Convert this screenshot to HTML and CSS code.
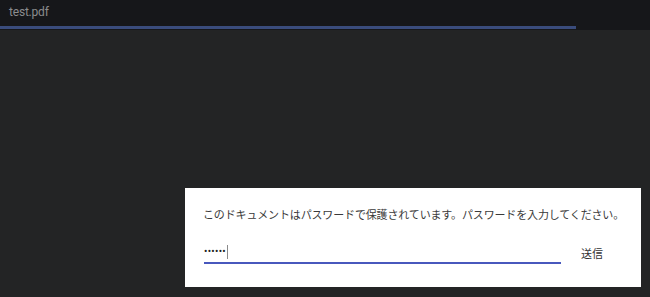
FILE: index.html
```html
<!DOCTYPE html>
<html lang="ja">
<head>
<meta charset="UTF-8" />
<title>test.pdf</title>
<link rel="stylesheet" href="styles.css">
</head>
<body>
  <header class="toolbar">
    <div class="title">test.pdf</div>
    <div class="progress"><div class="progress-fill" style="width: 576px"></div></div>
  </header>
  <main class="viewer">
    <form class="password-dialog" onsubmit="return false">
      <div class="prompt">このドキュメントはパスワードで保護されています。パスワードを入力してください。</div>
      <div class="row">
        <div class="field" role="textbox" aria-label="パスワード">
          <span class="dots">••••••</span><span class="caret"></span>
        </div>
        <button class="submit" type="submit">送信</button>
      </div>
    </form>
  </main>
</body>
</html>
```

FILE: styles.css
```css
* {
  box-sizing: border-box;
}
html, body {
  height: 100%;
}
body {
  margin: 0;
  background: #232425;
  font-family: Roboto, "Noto Sans CJK JP", sans-serif;
  display: flex;
  flex-direction: column;
  overflow: hidden;
}

.toolbar {
  height: 30px;
  background: #16171a;
  display: flex;
  flex-direction: column;
  justify-content: space-between;
}
.title {
  padding: 4px 0 0 9px;
  color: #8b8c8e;
  font-size: 12px;
  line-height: 16px;
  letter-spacing: -0.2px;
}
.progress {
  height: 3px;
  margin-bottom: 1px;
}
.progress-fill {
  height: 100%;
  background: #3a4c7c;
}

.viewer {
  flex: 1;
  display: flex;
  align-items: flex-end;
  justify-content: flex-end;
  padding: 0 9px 10px 0;
}

.password-dialog {
  width: 456px;
  height: 99px;
  background: #fff;
  padding: 19px 18px 0 18px;
  font-family: "Noto Sans CJK JP", sans-serif;
  color: #3a3a3a;
}
.prompt {
  font-size: 11px;
  line-height: 14px;
  white-space: nowrap;
  letter-spacing: -0.15px;
}
.row {
  display: flex;
  align-items: flex-end;
  margin-top: 21px;
}
.field {
  width: 357px;
  height: 22px;
  margin-left: 1px;
  border-bottom: 2px solid #4858bd;
  display: flex;
  align-items: center;
  color: #222;
}
.dots {
  font-family: Roboto, sans-serif;
  font-size: 10px;
  line-height: 14px;
  letter-spacing: 0.3px;
}
.caret {
  display: inline-block;
  width: 1px;
  height: 14px;
  margin-left: 1px;
  background: #8a8a8a;
}
.submit {
  margin-left: 20px;
  margin-bottom: 4px;
  padding: 0;
  border: none;
  background: none;
  font-family: "Noto Sans CJK JP", sans-serif;
  font-size: 11px;
  line-height: 14px;
  color: #333;
  cursor: pointer;
}
```
